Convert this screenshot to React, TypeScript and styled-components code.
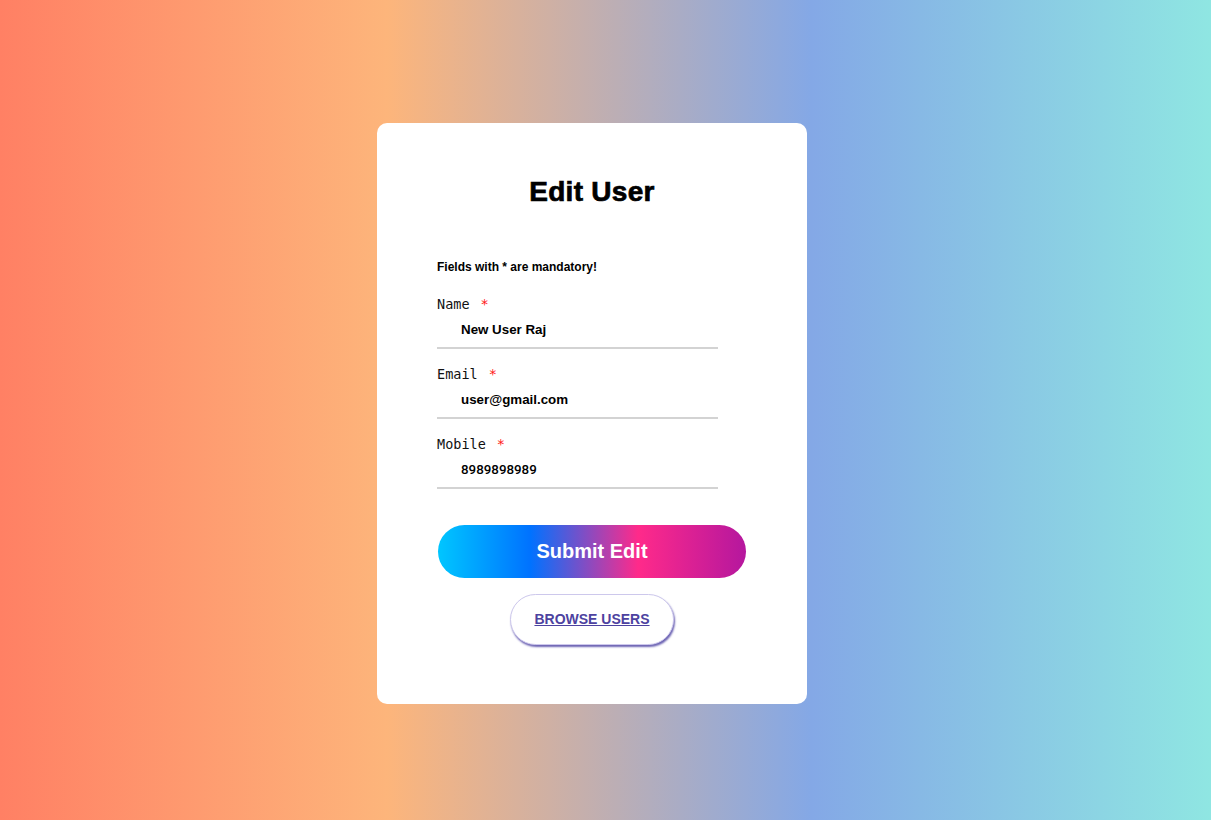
import styled, { createGlobalStyle } from "styled-components";

const GlobalStyle = createGlobalStyle`
  html, body {
    margin: 0;
    padding: 0;
  }
  body {
    font-family: "Liberation Sans", Arial, sans-serif;
  }
`;

const fields = [
  { label: "Name", value: "New User Raj", numeric: false },
  { label: "Email", value: "user@gmail.com", numeric: false },
  { label: "Mobile", value: "8989898989", numeric: true },
];

const App = () => {
  return (
    <>
      <GlobalStyle />
      <Page>
        <Card>
          <Title>Edit User</Title>
          <Note>Fields with * are mandatory!</Note>
          <Form onSubmit={(e) => e.preventDefault()}>
            {fields.map((f) => (
              <Field key={f.label}>
                <Label>
                  {f.label}
                  <Required>*</Required>
                </Label>
                <Input defaultValue={f.value} $numeric={f.numeric} />
              </Field>
            ))}
            <SubmitButton type="submit">Submit Edit</SubmitButton>
          </Form>
          <BrowseButton>BROWSE USERS</BrowseButton>
        </Card>
      </Page>
    </>
  );
};

export default App;

const Page = styled.div`
  min-height: 100vh;
  box-sizing: border-box;
  display: flex;
  align-items: center;
  justify-content: center;
  padding: 6px 27px 0 0;
  background: linear-gradient(
    to right,
    #ff8064 0%,
    #fdb57b 32%,
    #84a8e6 67%,
    #8fe6e2 100%
  );
`;

const Card = styled.div`
  width: 430px;
  box-sizing: border-box;
  background: #fff;
  border-radius: 10px;
  padding: 40px 60px 59px;
  display: flex;
  flex-direction: column;
  align-items: center;
`;

const Title = styled.h1`
  margin: 13px 0 52px;
  font-size: 28px;
  line-height: 32px;
  font-weight: 700;
  letter-spacing: 0.3px;
  -webkit-text-stroke: 0.7px #000;
  color: #000;
`;

const Note = styled.p`
  align-self: stretch;
  margin: 0 0 22px;
  font-size: 12px;
  line-height: 14px;
  font-weight: 700;
  color: #000;
`;

const Form = styled.form`
  align-self: stretch;
  display: flex;
  flex-direction: column;
`;

const Field = styled.div`
  display: flex;
  flex-direction: column;
  margin-bottom: 17px;
`;

const Label = styled.label`
  font-family: "DejaVu Sans Mono", "Liberation Mono", monospace;
  font-size: 13.5px;
  line-height: 16px;
  color: #111;
  margin-bottom: 6px;
`;

const Required = styled.span`
  margin-left: 11px;
  color: #ff1a1a;
`;

const Input = styled.input<{ $numeric: boolean }>`
  width: 281px;
  box-sizing: border-box;
  border: none;
  border-bottom: 2px solid #d3d3d3;
  outline: none;
  padding: 4px 0 9px 24px;
  font-family: ${(p) =>
    p.$numeric ? "Roboto, sans-serif" : '"Liberation Sans", Arial, sans-serif'};
  font-size: 13.33px;
  line-height: 16px;
  font-weight: ${(p) => (p.$numeric ? 500 : 700)};
  color: #000;
  background: transparent;
`;

const SubmitButton = styled.button`
  align-self: center;
  width: 308px;
  height: 53px;
  margin-top: 19px;
  border: none;
  border-radius: 27px;
  background: linear-gradient(
    to right,
    #00c6ff 0%,
    #0072ff 30%,
    #ff2a8a 65%,
    #b5179e 100%
  );
  color: #fff;
  font-family: "Liberation Sans", Arial, sans-serif;
  font-size: 20px;
  font-weight: 700;
  cursor: pointer;
`;

const BrowseButton = styled.button`
  width: 164px;
  height: 51px;
  margin-top: 16px;
  background: #fff;
  border: 1px solid #cdc8ec;
  border-radius: 26px;
  box-shadow: 1px 2px 2px #6c63b3;
  color: #4d42a0;
  font-family: "Liberation Sans", Arial, sans-serif;
  font-size: 14px;
  font-weight: 700;
  text-decoration: underline;
  cursor: pointer;
`;
